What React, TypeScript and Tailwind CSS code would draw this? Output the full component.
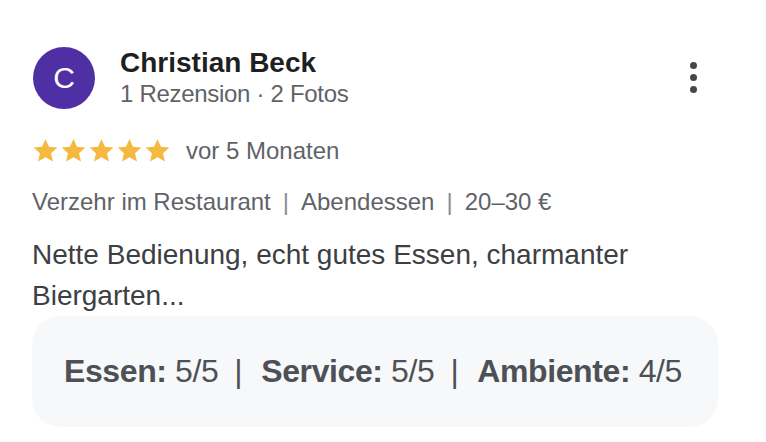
import type { FC } from 'react';

const Star: FC = () => (
  <svg viewBox="0 0 24 24" className="w-[27px] h-[27px]" fill="#f4b93e">
    <path d="M12 1.8l3.1 6.9 7.4.7-5.6 5 1.7 7.4L12 18l-6.6 3.8 1.7-7.4-5.6-5 7.4-.7z" />
  </svg>
);

const Sep: FC = () => <span className="mx-[12px] text-[#8a8d91]">|</span>;

const App: FC = () => {
  return (
    <div
      className="w-[766px] h-[442px] bg-white pl-8 pr-12 pt-[46px] overflow-hidden"
      style={{ fontFamily: '"Liberation Sans", Arial, sans-serif' }}
    >
      {/* Kopfzeile */}
      <div className="flex items-start">
        <div className="w-[62px] h-[62px] mt-px ml-px rounded-full bg-[#4e2fa4] flex items-center justify-center text-white text-[30px] leading-none">
          C
        </div>
        <div className="ml-[25px] flex flex-col">
          <p className="text-[28px] leading-[1.2] font-bold text-[#1f1f1f]">Christian Beck</p>
          <p className="text-[24px] leading-[1.2] tracking-[-0.3px] text-[#5f6368]">1 Rezension · 2 Fotos</p>
        </div>
        <button className="ml-auto mr-[21px] mt-[16px] flex flex-col gap-[5px]">
          <span className="w-[7px] h-[7px] rounded-full bg-[#444746]" />
          <span className="w-[7px] h-[7px] rounded-full bg-[#444746]" />
          <span className="w-[7px] h-[7px] rounded-full bg-[#444746]" />
        </button>
      </div>

      {/* Sterne */}
      <div className="mt-[28px] flex items-center">
        <div className="flex gap-[1px] -mt-[2px]">
          <Star />
          <Star />
          <Star />
          <Star />
          <Star />
        </div>
        <span className="ml-[15px] text-[24px] leading-[1.2] text-[#5f6368]">vor 5 Monaten</span>
      </div>

      <p className="mt-[22px] text-[24px] leading-[1.2] text-[#5f6368]">
        Verzehr im Restaurant
        <Sep />
        Abendessen
        <Sep />
        20–30 €
      </p>

      <p className="mt-[17px] text-[28px] leading-[41px] text-[#3c4043] w-[640px]">
        Nette Bedienung, echt gutes Essen, charmanter Biergarten...
      </p>

      {/* Einzelbewertungen */}
      <div className="h-[111px] w-[686px] rounded-[28px] bg-[#f7f8fa] flex items-center px-8 text-[32px] text-[#4d5156]">
        <p className="tracking-[-0.4px]">
          <span className="font-bold">Essen:</span> 5/5
          <span className="ml-[16px] mr-[19px] font-normal">|</span>
          <span className="font-bold">Service:</span> 5/5
          <span className="ml-[16px] mr-[19px] font-normal">|</span>
          <span className="font-bold">Ambiente:</span> 4/5
        </p>
      </div>
    </div>
  );
};

export default App;
